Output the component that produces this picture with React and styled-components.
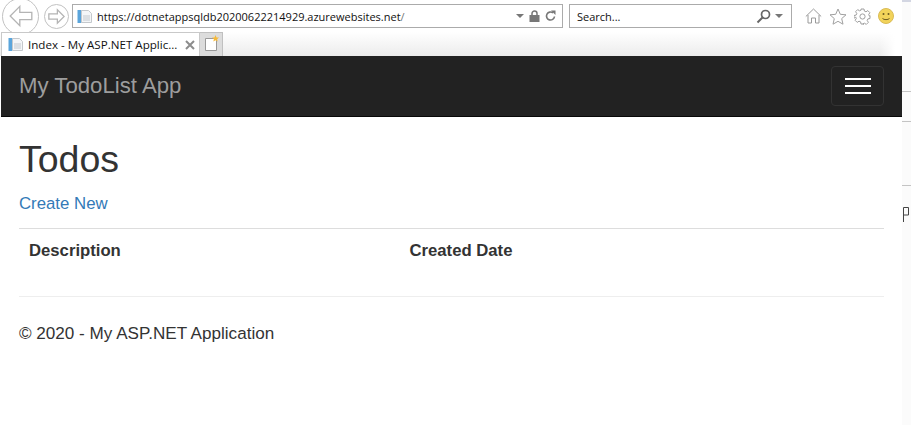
import React from 'react';
import styled, { createGlobalStyle } from 'styled-components';

const GlobalStyle = createGlobalStyle`
  html, body {
    margin: 0;
    padding: 0;
    background: #fff;
  }
  body {
    font-family: "Liberation Sans", Arial, sans-serif;
    color: #333;
    overflow: hidden;
  }
`;

const Screen = styled.div`
  width: 911px;
  height: 425px;
  display: flex;
  overflow: hidden;
`;

const Browser = styled.div`
  width: 902px;
  flex: none;
  display: flex;
  flex-direction: column;
`;

const Edge = styled.div`
  flex: 1;
  display: flex;
  flex-direction: column;
  background: #fbfbfb;
`;

const EdgeCap = styled.div`
  height: 2px;
  background: #d3d6e2;
`;

const EdgeTick = styled.div`
  height: 1px;
  background: #c4c4c4;
  margin-top: ${(p) => p.$gap}px;
`;

const Toolbar = styled.div`
  height: 32px;
  display: flex;
  align-items: center;
  padding-left: 2px;
`;

const RoundButton = styled.div`
  width: ${(p) => p.$size}px;
  height: ${(p) => p.$size}px;
  margin-right: ${(p) => p.$gap}px;
  flex: none;
  border: 1px solid #c2c2c2;
  border-radius: 50%;
  box-sizing: border-box;
  display: flex;
  align-items: center;
  justify-content: center;
`;

const Field = styled.div`
  height: 24px;
  box-sizing: border-box;
  width: ${(p) => p.$width}px;
  margin-right: ${(p) => p.$gap}px;
  flex: none;
  border: 1px solid #ababab;
  display: flex;
  align-items: center;
  color: #111;
  font-family: "Open Sans", "Noto Sans", sans-serif;
`;

const UrlIcon = styled.span`
  margin-left: 4px;
`;

const UrlText = styled.span`
  margin-left: 5px;
  flex: 1;
  white-space: nowrap;
  font-size: 11px;
`;

const Muted = styled.span`
  color: #777;
`;

const SearchText = styled.span`
  margin-left: 7px;
  flex: 1;
  font-size: 11px;
`;

const FieldIcons = styled.div`
  display: flex;
  align-items: center;
  gap: ${(p) => p.$gap || 4}px;
  margin-right: ${(p) => p.$right}px;
`;

const TabStrip = styled.div`
  height: 24px;
  display: flex;
  align-items: stretch;
  background:
    linear-gradient(90deg, rgba(255, 255, 255, 0) 880px, #fff 895px),
    linear-gradient(180deg, #fff 0, #ececec 100%);
`;

const Tab = styled.div`
  width: 199px;
  margin-left: 1px;
  box-sizing: border-box;
  border: 1px solid #c9c9c9;
  border-bottom: none;
  background: #fff;
  display: flex;
  align-items: center;
  padding-left: 6px;
  font-family: "Open Sans", "Noto Sans", sans-serif;
  font-size: 11.6px;
  color: #111;
`;

const TabTitle = styled.span`
  margin-left: 5px;
  flex: 1;
  white-space: nowrap;
`;

const NewTab = styled.div`
  width: 23px;
  box-sizing: border-box;
  border: 1px solid #c0c0c0;
  border-left: none;
  border-bottom: none;
  background: #dcdcdc;
  padding: 1px 0 0 4px;
`;

const Navbar = styled.nav`
  height: 60px;
  background: #222;
  border-bottom: 1px solid #080808;
  margin-left: 1px;
  display: flex;
  align-items: center;
  justify-content: space-between;
  padding: 0 18px;
`;

const Brand = styled.a`
  font-size: 22.2px;
  color: #9d9d9d;
`;

const Hamburger = styled.div`
  width: 53px;
  height: 40px;
  box-sizing: border-box;
  border: 1px solid #333;
  border-radius: 4px;
  display: flex;
  flex-direction: column;
  align-items: center;
  justify-content: center;
  gap: 5px;
`;

const Bar = styled.div`
  width: 26px;
  height: 2px;
  background: #fff;
`;

const Content = styled.main`
  padding: 0 18px 0 19px;
`;

const Title = styled.h2`
  margin: 21px 0 0;
  font-size: 37.5px;
  font-weight: 400;
  line-height: 43px;
`;

const CreateLink = styled.a`
  display: block;
  margin-top: 11px;
  font-size: 16.8px;
  line-height: 24px;
  color: #337ab7;
`;

const Table = styled.div`
  margin-top: 12px;
  border-top: 1px solid #ddd;
  display: grid;
  grid-template-columns: 380.5px 1fr;
  padding: 12px 10px 11px;
  font-size: 16.7px;
  line-height: 20px;
  font-weight: bold;
`;

const Rule = styled.hr`
  margin: 24px 0 0;
  border: 0;
  border-top: 1px solid #eee;
`;

const Footer = styled.p`
  margin: 25px 0 0;
  font-size: 17.1px;
  line-height: 24px;
`;

const Svg = styled.svg`
  display: block;
  flex: none;
`;

const PageIcon = () => (
  <Svg width="15" height="15" viewBox="0 0 15 15">
    <rect x="0.5" y="1" width="4" height="13" fill="#5aa5dc" />
    <path d="M4.500 1.500h7l3 3v9h-10z" fill="#f4f6f8" stroke="#c4c8cc" />
    <path d="M6 7h7M6 9h7M6 11h7" stroke="#c2c8ce" />
  </Svg>
);

const Caret = () => (
  <Svg width="8" height="4" viewBox="0 0 8 4">
    <path d="M0 0h8L4 4z" fill="#777" />
  </Svg>
);

const Lock = () => (
  <Svg width="11" height="12" viewBox="0 0 11 12">
    <path d="M3 6V3.500a2.500 2.500 0 0 1 5 0V6" fill="none" stroke="#777" strokeWidth="1.5" />
    <rect x="0.5" y="5" width="10" height="7" fill="#777" />
  </Svg>
);

const Refresh = () => (
  <Svg width="11" height="12" viewBox="0 0 11 12">
    <path d="M9.500 6.500a4 4 0 1 1-1.500-3.600" fill="none" stroke="#777" strokeWidth="1.6" />
    <path d="M6 0.500h4.500v4.500z" fill="#777" />
  </Svg>
);

const Magnifier = () => (
  <Svg width="15" height="15" viewBox="0 0 15 15">
    <circle cx="9.500" cy="5.500" r="4" fill="none" stroke="#666" strokeWidth="1.7" />
    <path d="M6.500 8.500L1.500 13.500" stroke="#666" strokeWidth="2" />
  </Svg>
);

const CloseIcon = () => (
  <Svg width="10" height="10" viewBox="0 0 10 10">
    <path d="M1 1l8 8M9 1l-8 8" stroke="#8c8c8c" strokeWidth="2" />
  </Svg>
);

const CloseSlot = styled.span`
  margin-right: 4px;
`;

const ArrowCircle = ({ size, gap, flip }) => {
  const s = Math.round(size * 0.66);
  return (
    <RoundButton $size={size} $gap={gap}>
      <Svg width={s} height={s} viewBox="0 0 20 20">
        <path
          d={flip ? 'M11 2l8 8-8 8v-5H1V7h10z' : 'M9 2L1 10l8 8v-5h10V7H9z'}
          fill="none"
          stroke="#b4b4b4"
          strokeWidth={flip ? 1.5 : 1.1}
        />
      </Svg>
    </RoundButton>
  );
};

const ToolIcons = styled.div`
  display: flex;
  align-items: center;
  gap: 7px;
`;

const Home = () => (
  <Svg width="17" height="16" viewBox="0 0 17 16">
    <path d="M0.800 8.500L8.500 1l7.700 7.500M3 7v8h3.500v-5h4v5H14V7" fill="none" stroke="#9a9a9a" />
  </Svg>
);

const Star = () => (
  <Svg width="18" height="17" viewBox="0 0 18 17">
    <path d="M9 1l2.300 5.300 5.700.5-4.300 3.800 1.300 5.600L9 13.300l-5 2.900 1.300-5.600L1 6.800l5.700-.5z" fill="none" stroke="#a0a0a0" />
  </Svg>
);

const Gear = () => (
  <Svg width="17" height="17" viewBox="0 0 17 17">
    <circle cx="8.500" cy="8.500" r="2.600" fill="none" stroke="#a0a0a0" />
    <path
      d="M7 1h3l.4 2.100 1.600.7 1.800-1.200 2.100 2.100-1.200 1.800.7 1.600L16 7.500v3l-2.100.4-.7 1.600 1.200 1.800-2.100 2.100-1.800-1.200-1.600.7L10 16H7l-.4-2.100-1.600-.7-1.800 1.200-2.100-2.100 1.200-1.800-.7-1.600L0 10.500v-3l2.100-.4.700-1.600L1.600 3.700l2.100-2.100 1.800 1.200 1.600-.7z"
      fill="none"
      stroke="#a0a0a0"
    />
  </Svg>
);

const Smiley = () => (
  <Svg width="16" height="16" viewBox="0 0 16 16">
    <circle cx="8" cy="8" r="7.500" fill="#f2d35a" stroke="#d9bb55" />
    <circle cx="5.500" cy="6" r="1" fill="#6d5a20" />
    <circle cx="10.500" cy="6" r="1" fill="#6d5a20" />
    <path d="M4.500 10.500c1.500 1.500 5.500 1.500 7 0" fill="none" stroke="#6d5a20" />
  </Svg>
);

const NewTabIcon = () => (
  <Svg width="16" height="18" viewBox="0 0 16 18">
    <path d="M1.500 4.500h11v12h-11z" fill="#fff" stroke="#999" />
    <path d="M11.500 1l1 2.400 2.500.2-1.900 1.600.6 2.400-2.200-1.300-2.200 1.300.6-2.400L8 3.600l2.500-.2z" fill="#f5b93a" />
  </Svg>
);

const FragmentSvg = styled.svg`
  display: block;
  margin: 21px 0 0 1px;
`;

const Fragment = () => (
  <FragmentSvg width="6" height="15" viewBox="0 0 6 15">
    <path d="M0.500 15V0.500h5V8H1" fill="none" stroke="#444" />
  </FragmentSvg>
);

const App = () => (
  <>
    <GlobalStyle />
    <Screen>
      <Browser>
        <Toolbar>
          <ArrowCircle size={37} gap={5} />
          <ArrowCircle size={25} gap={3} flip />
          <Field $width={491} $gap={6}>
            <UrlIcon>
              <PageIcon />
            </UrlIcon>
            <UrlText>
              https://dotnetappsqldb20200622214929.azurewebsites.net<Muted>/</Muted>
            </UrlText>
            <FieldIcons $right={6} $gap={5}>
              <Caret />
              <Lock />
              <Refresh />
            </FieldIcons>
          </Field>
          <Field $width={223} $gap={13}>
            <SearchText>Search...</SearchText>
            <FieldIcons $right={8} $gap={4}>
              <Magnifier />
              <Caret />
            </FieldIcons>
          </Field>
          <ToolIcons>
            <Home />
            <Star />
            <Gear />
            <Smiley />
          </ToolIcons>
        </Toolbar>
        <TabStrip>
          <Tab>
            <PageIcon />
            <TabTitle>Index - My ASP.NET Applic...</TabTitle>
            <CloseSlot>
              <CloseIcon />
            </CloseSlot>
          </Tab>
          <NewTab>
            <NewTabIcon />
          </NewTab>
        </TabStrip>
        <Navbar>
          <Brand>My TodoList App</Brand>
          <Hamburger>
            <Bar />
            <Bar />
            <Bar />
          </Hamburger>
        </Navbar>
        <Content>
          <Title>Todos</Title>
          <CreateLink>Create New</CreateLink>
          <Table>
            <span>Description</span>
            <span>Created Date</span>
          </Table>
          <Rule />
          <Footer>© 2020 - My ASP.NET Application</Footer>
        </Content>
      </Browser>
      <Edge>
        <EdgeCap />
        <EdgeTick $gap={89} />
        <EdgeTick $gap={29} />
        <EdgeTick $gap={63} />
        <Fragment />
      </Edge>
    </Screen>
  </>
);

export default App;
